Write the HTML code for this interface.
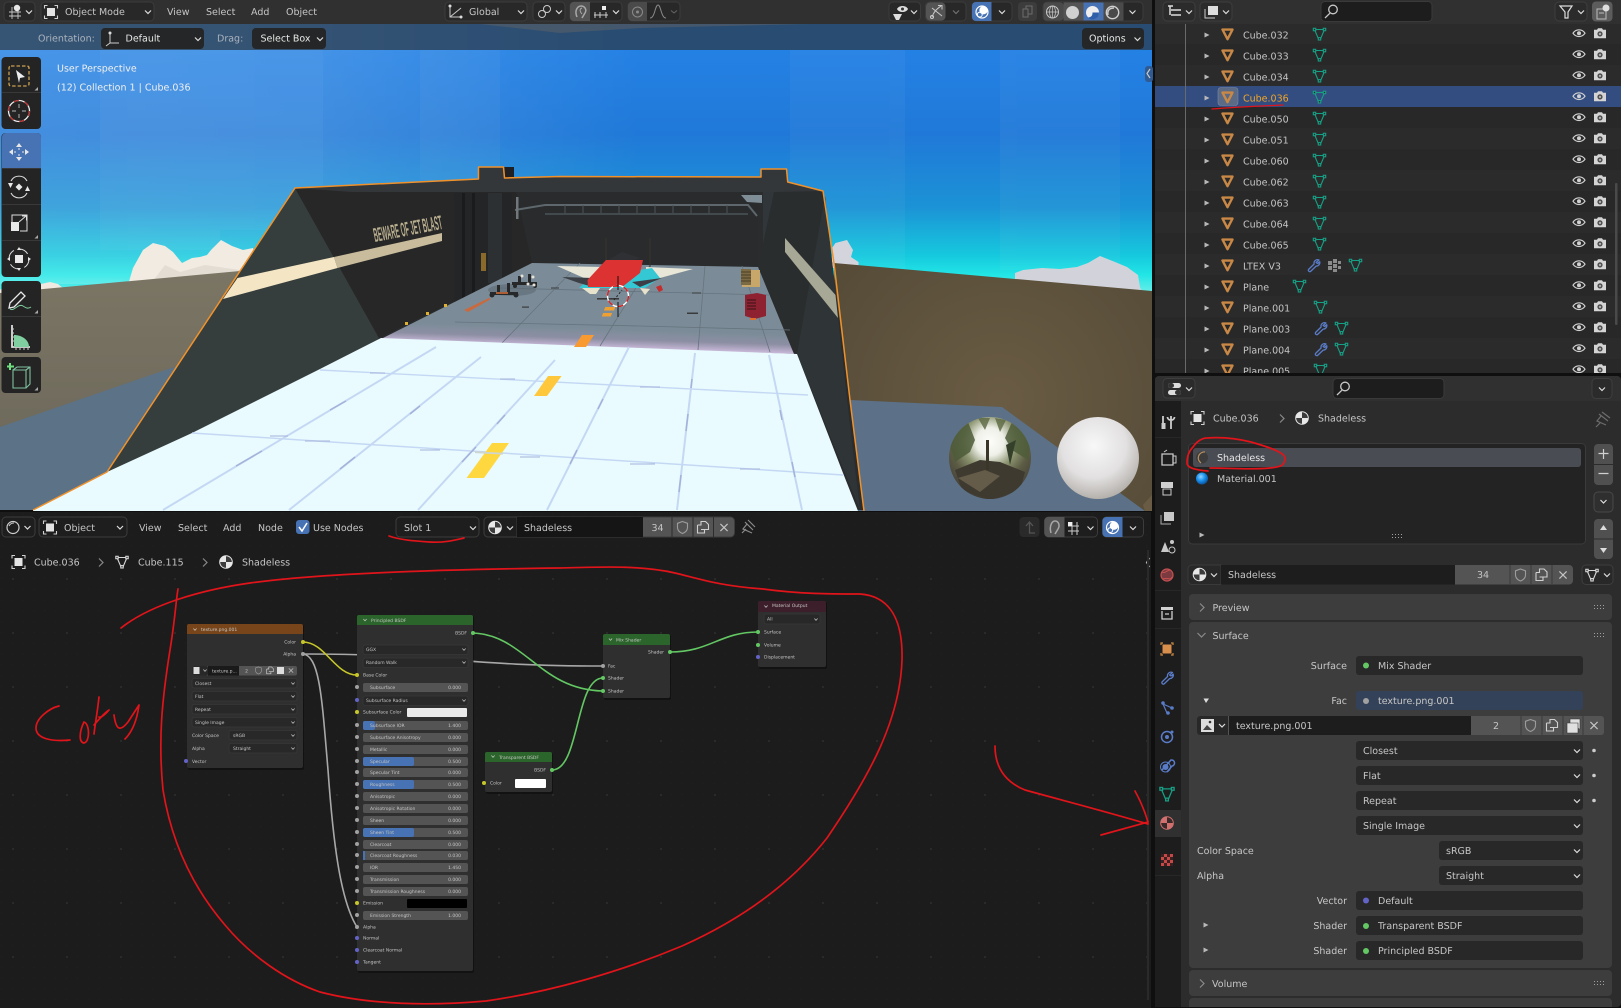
<!DOCTYPE html>
<html lang="en"><head><meta charset="utf-8"><title>Blender</title>
<style>
html,body{margin:0;padding:0;background:#0f0f0f;width:1621px;height:1008px;overflow:hidden}
svg{display:block;filter:blur(.3px)}
text{font-family:"DejaVu Sans","Liberation Sans",sans-serif;font-size:9.5px;fill:#c6c6c6;text-rendering:geometricPrecision}
.r{text-anchor:end}.m{text-anchor:middle}
.w{fill:#e6e6e6}
.n text,text.n{font-size:4.5px;fill:#c4c4c4}
.red{fill:none;stroke:#e0141a;stroke-width:1.7;stroke-linecap:round;stroke-linejoin:round}
</style></head><body>
<svg xmlns="http://www.w3.org/2000/svg" width="1621" height="1008" viewBox="0 0 1621 1008">
<defs>
<linearGradient id="sky" x1="0" y1="50" x2="0" y2="292" gradientUnits="userSpaceOnUse"><stop offset="0" stop-color="#2481e4"/><stop offset=".35" stop-color="#2079d8"/><stop offset=".65" stop-color="#1c93d6"/><stop offset=".85" stop-color="#16c9de"/><stop offset=".93" stop-color="#22e6e6"/><stop offset="1" stop-color="#66eee8"/></linearGradient>
<linearGradient id="skyl" x1="0" y1="0" x2="640" y2="0" gradientUnits="userSpaceOnUse"><stop offset="0" stop-color="#fff" stop-opacity=".16"/><stop offset=".5" stop-color="#fff" stop-opacity=".14"/><stop offset="1" stop-color="#fff" stop-opacity="0"/></linearGradient>
<linearGradient id="gl" x1="0" y1="270" x2="0" y2="470" gradientUnits="userSpaceOnUse"><stop offset="0" stop-color="#7b7564"/><stop offset="1" stop-color="#6c685a"/></linearGradient>
<radialGradient id="gr" cx="1000" cy="400" r="200" gradientUnits="userSpaceOnUse"><stop offset="0" stop-color="#6a5c44"/><stop offset="1" stop-color="#564c38"/></radialGradient>
<linearGradient id="fl" x1="585" y1="328" x2="584.4" y2="347" gradientUnits="userSpaceOnUse"><stop offset="0" stop-color="#7b8c98"/><stop offset=".55" stop-color="#8d8fa4"/><stop offset="1" stop-color="#c8b8d8"/></linearGradient>
<radialGradient id="ws" cx=".45" cy=".35" r=".72"><stop offset="0" stop-color="#f8f8f8"/><stop offset=".55" stop-color="#e2e0e0"/><stop offset="1" stop-color="#a8a49e"/></radialGradient>
<radialGradient id="hs" cx=".5" cy=".3" r=".78"><stop offset="0" stop-color="#fdfdfa"/><stop offset=".22" stop-color="#eef0e8"/><stop offset=".42" stop-color="#8c9470"/><stop offset=".62" stop-color="#5c5c44"/><stop offset=".85" stop-color="#46423a"/><stop offset="1" stop-color="#2f2b22"/></radialGradient>
<radialGradient id="ball" cx=".4" cy=".35" r=".7"><stop offset="0" stop-color="#8fd4ff"/><stop offset=".5" stop-color="#1890ec"/><stop offset="1" stop-color="#0a4a90"/></radialGradient>
<pattern id="gd" x="12" y="38" width="54" height="54" patternUnits="userSpaceOnUse"><rect width="2" height="2" fill="#2a2a2a"/></pattern>
<pattern id="gf" x="12" y="38" width="10.8" height="10.8" patternUnits="userSpaceOnUse"><rect width="1" height="1" fill="#212121"/></pattern>
<clipPath id="vp"><rect x="0" y="24" width="1152" height="487"/></clipPath>
<clipPath id="ol"><rect x="1155" y="24" width="466" height="349"/></clipPath>
<clipPath id="ohs"><circle cx="990" cy="458" r="41"/></clipPath>

<path id="chev" d="M-3,-1.5L0,1.5L3,-1.5" fill="none" stroke="#ddd" stroke-width="1.2"/>
<path id="chevr" d="M-2,-4L2,0L-2,4" fill="none" stroke="#8a8a8a" stroke-width="1.2"/>
<path id="arr" d="M-2.5,-2.5L2.5,0L-2.5,2.5Z" fill="#b8b8b8"/>
<g id="obj"><path d="M-6.5,-3.5V-6.5H-3.5M3.5,-6.5H6.5V-3.5M6.5,3.5V6.5H3.5M-3.5,6.5H-6.5V3.5" fill="none" stroke="#d0d0d0" stroke-width="1.1"/><rect x="-4" y="-4" width="8" height="8" fill="#e4e4e4"/></g>
<g id="mat"><circle r="6.3" fill="#e8e8e8"/><path d="M0,0V-6.3A6.3,6.3 0 0 1 6.3,0ZM0,0V6.3A6.3,6.3 0 0 1 -6.3,0Z" fill="#3c3c3c"/><circle r="6.3" fill="none" stroke="#e8e8e8"/></g>
<g id="ot"><path d="M-5,-4.6H5L0,5Z" fill="none" stroke="#c98845" stroke-width="2.4" stroke-linejoin="round"/></g>
<g id="md" fill="none" stroke="#16a085" stroke-width="1.1"><path d="M-5,-4.5H5L1,5H-1Z"/><rect x="-6.2" y="-5.7" width="2.4" height="2.4" fill="#282828"/><rect x="3.8" y="-5.7" width="2.4" height="2.4" fill="#282828"/><rect x="-1.2" y="3.6" width="2.4" height="2.4" fill="#282828"/></g>
<g id="mdw" fill="none" stroke="#d8d8d8" stroke-width="1.1"><path d="M-5,-4.5H5L1,5H-1Z"/><rect x="-6.2" y="-5.7" width="2.4" height="2.4" fill="#282828"/><rect x="3.8" y="-5.7" width="2.4" height="2.4" fill="#282828"/><rect x="-1.2" y="3.6" width="2.4" height="2.4" fill="#282828"/></g>
<path id="wr" d="M5.5,-5.5A3.5,3.5 0 0 0 0.6,-1.5L-5,4A1.5,1.5 0 0 0 -3,6L2.6,0.6A3.5,3.5 0 0 0 6.2,-3.8L4,-2L2.6,-3Z" fill="none" stroke="#5a7cc8" stroke-width="1.3" stroke-linejoin="round"/>
<g id="eye"><path d="M-6,0C-3,-4.5 3,-4.5 6,0C3,4.5 -3,4.5 -6,0Z" fill="none" stroke="#d0d0d0" stroke-width="1.2"/><circle r="2" fill="#d0d0d0"/></g>
<g id="cam"><path d="M-6,-3.4H-3L-2,-5H2L3,-3.4H6V5H-6Z" fill="#d4d4d4"/><circle cy=".7" r="2.6" fill="#4c4c4c"/><circle cy=".7" r="1.2" fill="#b0b0b0"/></g>
<g id="row"><use href="#arr" x="1207" y="0"/><use href="#ot" x="1227.5" y="-.8"/><use href="#eye" x="1579" y="-1.8"/><use href="#cam" x="1600" y="-1.8"/></g>
<g id="shield"><path d="M0,-6L5,-4.2V0C5,3 2.5,5 0,6C-2.5,5 -5,3 -5,0V-4.2Z" fill="none" stroke="#9c9c9c" stroke-width="1.1"/></g>
<g id="copy" fill="none" stroke="#d0d0d0" stroke-width="1.1"><path d="M-5.5,-2.5H-2V-6H2.5L5.5,-3V2H-2"/><path d="M-5.5,-2.5V5.5H1.5V2"/></g>
<path id="xx" d="M-3.6,-3.6L3.6,3.6M3.6,-3.6L-3.6,3.6" stroke="#c4c4c4" stroke-width="1.2"/>
<g id="over"><circle r="6" fill="none" stroke="#fff" stroke-width="1.2"/><circle cx="1.5" cy="-1.8" r="4.2" fill="#fff"/><circle cx="-2.2" cy="2.6" r="2.4" fill="none" stroke="#fff"/></g>
<path id="mag" d="M2,-2.5m-4.3,0a4.3,4.3 0 1 0 8.6,0a4.3,4.3 0 1 0 -8.6,0M-1.2,1.3L-6,6" fill="none" stroke="#c8c8c8" stroke-width="1.3"/>
<g id="drag" fill="#a0a0a0"><rect x="0" y="0" width="1" height="1"/><rect x="3" y="0" width="1" height="1"/><rect x="6" y="0" width="1" height="1"/><rect x="9" y="0" width="1" height="1"/><rect x="0" y="3" width="1" height="1"/><rect x="3" y="3" width="1" height="1"/><rect x="6" y="3" width="1" height="1"/><rect x="9" y="3" width="1" height="1"/></g>
<rect id="sl" x="363" width="105" height="9" rx="2" fill="#545454"/>
<rect id="dd" width="105" height="9.5" rx="2" fill="#282828" stroke="#3e3e3e" stroke-width=".5"/>
<rect id="pd" width="227" height="19" rx="3" fill="#282828"/>
<path id="nc" d="M-1.6,-1L0,.8L1.6,-1" fill="none" stroke="#ccc" stroke-width=".7"/>
</defs>

<!-- base -->
<rect width="1621" height="1008" fill="#0f0f0f"/>

<!-- ================ 3D VIEWPORT ================ -->
<g clip-path="url(#vp)">
<rect x="0" y="24" width="1152" height="270" fill="url(#sky)"/>
<rect x="0" y="24" width="640" height="260" fill="url(#skyl)"/>
<g fill="#fff" opacity=".035"><rect x="100" y="50" width="120" height="200"/><rect x="218" y="50" width="105" height="180"/><rect x="420" y="50" width="80" height="130"/><rect x="790" y="50" width="115" height="220"/><rect x="1000" y="50" width="120" height="220"/></g>
<path d="M128,285L133,268L143,250L153,243L165,246L173,252L182,263L192,258L200,257L207,255L211,250L221,240L232,246L243,250L253,248L262,285Z" fill="#f2ebe2"/>
<path d="M150,285L165,265L180,272L205,265L240,270L250,285Z" fill="#e4ddd4"/>
<path d="M0,290L8,283L18,282L28,286L41,284L50,282L58,284L64,289L64,295H0Z" fill="#efe9e0"/>
<path d="M832,262L832,248L835.500,243L847,240L853,250L851,257L858.500,262L858.500,268H832Z" fill="#d4d5dc"/>
<path d="M1015,282L1015,273L1023,270L1042,268L1060,269L1077,267L1088,263L1100,256L1115,262L1127,267L1138,275L1140,287L1142,292H1015Z" fill="#d2d3da"/>

<!-- left ground -->
<path d="M0,293L240,271L300,270L120,510H0Z" fill="url(#gl)"/>
<path d="M0,427L177,366L120,510H0Z" fill="#5b7287"/>
<!-- right ground -->
<path d="M834,263L1152,291V511H840Z" fill="url(#gr)"/>
<path d="M850,400L1002,407L1145,511H850Z" fill="#5c7187"/>
<path d="M1143,505L1152,495V511H1145Z" fill="#6a5c44"/>

<!-- hangar structure -->
<path d="M295,188L107,472L33,510H864L823,191L787.5,182L786.5,169H761V177L560,176L504.5,178L503.5,167H478.5V179Z" fill="#2a2c2d"/>
<path d="M295,188L107,472L33,510H190L379,338Z" fill="#363e3d"/>
<path d="M295,188L379,338L532,263L516,190Z" fill="#262726"/>
<path d="M295,188L478.5,179V167H503.5L504.5,178L560,176L761,177V169H786.5L787.5,182L823,191L820,192H352Z" fill="#33373a"/>
<path d="M504,167H514V178H505Z" fill="#1e2024"/>
<path d="M516,192H758V268L532,263Z" fill="#292b2d"/>
<path d="M454,193H512V282L454,311Z" fill="#232526"/>
<rect x="462" y="193" width="3" height="112" fill="#1a1b1c"/><rect x="472" y="193" width="3" height="100" fill="#1a1b1c"/><rect x="488" y="193" width="14" height="90" fill="#2c3032"/>
<path d="M763,192H774V268H763Z" fill="#30363a"/>
<path d="M774,192L823,191L860,510L797,354L758,267Z" fill="#2a2d2e"/>
<path d="M825,196L847,400L860,510L797,354Z" fill="#2f3436"/>
<!-- stripes -->
<path d="M223,299L237.5,278L334,257L337.5,268Z" fill="#f4e6c4"/>
<path d="M334,257L442,233V241L337.5,268Z" fill="#c8bc9c"/>
<path d="M785,238L835.5,295L838,318L785,252Z" fill="#a8a896"/>
<text transform="translate(375,242) rotate(-11) scale(.62,2.1)" style="font-size:9.5px;font-weight:bold;fill:#b8ad8e;font-family:'Liberation Sans',sans-serif">BEWARE OF JET BLAST</text>
<rect x="481" y="253" width="5" height="18" fill="#8a6a2a"/>
<!-- railing -->
<path d="M515,210L545,205H748L757,216" fill="none" stroke="#5d676c" stroke-width="2"/>
<path d="M545,214H748" fill="none" stroke="#4c5459" stroke-width="1.5"/>
<path d="M565,205v8M583,205v8M601,205v8M619,205v8M637,205v8M655,205v8M673,205v8M691,205v8M709,205v8M727,205v8" stroke="#4c5459"/>
<path d="M741,195H762V203L747,202Z" fill="#7f8d96"/>
<rect x="516" y="197" width="2.500" height="22" fill="#70787e"/>
<!-- grey floor -->
<path d="M532,263L758,267L794,354L379,340Z" fill="url(#fl)"/>
<g stroke="#66747e" stroke-width=".8" fill="none"><path d="M455,322L640,326L790,330"/><path d="M500,288L770,295"/><path d="M580,263L500,345M650,265L600,346M705,266L698,350M742,266L770,352"/></g>
<g fill="#3a3a3a"><rect x="687" y="312.500" width="11" height="1.500"/><rect x="522" y="306.500" width="7" height="1.200"/><rect x="551" y="287.500" width="8" height="1"/><rect x="692" y="292.500" width="9" height="1"/></g>
<path d="M464,310L489,298L491,299L468,312Z" fill="#c86a40"/>
<g fill="#e0b030"><rect x="405" y="322" width="3" height="3"/><rect x="426" y="312" width="3" height="3"/><rect x="444" y="304" width="3" height="3"/></g>
<!-- drones -->
<ellipse cx="512" cy="290" rx="24" ry="6" fill="#5a6670" opacity=".55"/>
<g fill="#26282a"><rect x="490" y="292" width="28" height="3"/><rect x="497" y="285" width="3" height="9"/><rect x="507" y="283" width="3" height="11"/><circle cx="492" cy="295" r="2.500"/><circle cx="516" cy="295" r="2.500"/><rect x="512" y="282" width="25" height="3"/><rect x="518" y="276" width="3" height="8"/><rect x="528" y="274" width="3" height="10"/><circle cx="515" cy="286" r="2"/><circle cx="535" cy="286" r="2"/></g>
<path d="M496,293H508" stroke="#d8703a" stroke-width="1.500"/>
<g fill="#e6e2d8"><circle cx="533" cy="277" r="1.500"/><circle cx="522" cy="276" r="1.500"/><circle cx="528" cy="284" r="1.500"/><circle cx="534" cy="285" r="1.500"/></g>
<!-- plane -->
<path d="M606,238V262M650,238V268" stroke="#39342c" stroke-width="1"/>
<path d="M557,266L602,267L602,282L584,278Z" fill="#e8e6d6"/>
<path d="M646,267L693,269L660,278L646,278Z" fill="#e8e6d6"/>
<path d="M579,288L588,280L640,270L652,268L660,278L645,288Z" fill="#34c8d4"/>
<path d="M562,277L593,278L593,287L579,283ZM662,278L632,282L640,287Z" fill="#3c4046"/>
<path d="M582,288H600L596,294H590ZM640,288L650,289L645,295Z" fill="#e6e2cc"/>
<path d="M608,260L622,252L640,258L625,263Z" fill="#2e3034"/>
<path d="M606,260L643,260L640,273L622,287L588,287L587.5,280Z" fill="#dc3232"/>
<path d="M656,287L661,285L663,290L659,292Z" fill="#c62c2c"/>
<rect x="597" y="298" width="22" height="1.6" fill="#3a3a3a"/>
<!-- crate & cabinet -->
<rect x="742" y="270" width="18" height="17" fill="#c8a86a"/><rect x="741" y="269" width="10" height="16" fill="#7c6a44"/>
<path d="M741,272H751M741,275H751M741,278H751M741,281H751" stroke="#3a3020" stroke-width=".8"/>
<path d="M745,295L757,293L766,295V316L755,319L745,316Z" fill="#8e2230"/>
<path d="M747,300H756M747,303H756M747,306H756M747,309H756" stroke="#3a1218" stroke-width="1"/>
<rect x="750" y="318" width="6" height="2" fill="#e07030"/>
<!-- cursor dashes -->
<rect x="605" y="307" width="10" height="3.5" fill="#f0a030" transform="skewX(-20) translate(112,0)"/>
<rect x="603" y="313" width="9" height="3.5" fill="#f0a030" transform="skewX(-20) translate(114,0)"/>
<!-- white floor -->
<path d="M33,510L107,472L192,433L318,370L381,338L797,354L843,473L858,511H33Z" fill="#e9fbff"/>
<g stroke="#c4d8f4" stroke-width="2" fill="none">
<path d="M163,510L436,347M289,510L481,357M418,510L555,360M547,510L629,347M677,510L695,353M802,510L769,355"/>
<path d="M192,433L843,475" stroke-width="1.500"/><path d="M320,370L808,395" stroke-width="1.400"/>
</g>
<g stroke="#a4b2da" stroke-width="1.500" fill="none"><path d="M236,466L262,451M330,410L346,401M340,469L355,457M410,414L420,406M462,462L476,447M497,424L505,415M570,464L577,450M598,409L603,399M679,492L681,475M686,431L688,414M691,388L692,379M795,477L792,462M782,420L780,410"/><path d="M270,436H288M305,441H330M420,450H440M520,457H540M630,464H655M740,469H760M370,373H385M500,379H515M640,387H660" stroke-width="1.100"/></g>
<path d="M492,443H509L484,478H466.5Z" fill="#ffd840"/><rect x="475" y="452" width="28" height="1.8" fill="#cfd6cf" transform="rotate(3 488 453)"/>
<path d="M548,376H561.6L547,396H534Z" fill="#ffc83c"/>
<path d="M582,335H594L586,347H574Z" fill="#f89a30"/>
<!-- outline -->
<path d="M33,510L107,472L295,188L478.5,179V167H503.5L504.5,178L560,176.5L761,177V169H786.5L787.7,182L823,191L834,263L850,400L864,511" fill="none" stroke="#f0922c" stroke-width="1.5" stroke-linejoin="round"/>
<!-- 3d cursor -->
<circle cx="618" cy="296" r="10.5" fill="none" stroke="#fff" stroke-width="1.4"/>
<circle cx="618" cy="296" r="10.5" fill="none" stroke="#d42020" stroke-width="1.4" stroke-dasharray="6 5"/>
<path d="M618,276V290M618,302V317" stroke="#111" stroke-width="1"/><path d="M614,300L622,290" stroke="#222" stroke-dasharray="2 2"/>
<!-- spheres -->
<circle cx="990" cy="458" r="41" fill="url(#hs)"/>
<g clip-path="url(#ohs)">
<path d="M950,445L958,430L968,422L975,440L970,452L955,462Z" fill="#4c5a38" opacity=".85"/>
<path d="M1030,445L1022,430L1012,422L1005,438L1012,450L1028,460Z" fill="#4e5c38" opacity=".85"/>
<path d="M978,418L985,430L990,418ZM995,418L1000,432L1006,420Z" fill="#5a6640" opacity=".8"/>
<path d="M1006,445L1010,465L1016,440Z" fill="#34402a"/>
<path d="M955,470L980,460L1000,462L1025,472L1020,490L990,500L962,490Z" fill="#3e3a30"/>
<path d="M958,478L985,470L1000,476L980,492Z" fill="#6e6450" opacity=".8"/>
<rect x="986" y="440" width="3" height="30" fill="#3a3628"/>
</g>
<circle cx="1098" cy="458" r="41" fill="url(#ws)"/>
<!-- toolbar strip -->
<rect x="0" y="24" width="1152" height="26" fill="#2c2c2c" opacity=".62"/>
<path d="M480,24H810L640,28L560,33Z" fill="#666" opacity=".45"/>
</g>

<!-- sidebar arrow -->
<rect x="1145" y="66" width="8" height="16" rx="3" fill="#2f5a92"/><path d="M1150,69L1147,73.5L1150,78" fill="none" stroke="#c8c8c8" stroke-width="1.2"/>

<!-- tool settings -->
<text x="38" y="41.5" style="fill:#aab2bc">Orientation:</text>
<rect x="101" y="28" width="103" height="21" rx="4" fill="#252627"/>
<path d="M110,34V43H119M110,43L106,46" fill="none" stroke="#ccc"/><circle cx="110" cy="33" r="1.5" fill="#ddd"/><text x="125.500" y="41.500" class="w">Default</text><use href="#chev" x="198" y="39"/>
<text x="217" y="41.5" style="fill:#aab2bc">Drag:</text>
<rect x="252" y="28" width="74" height="21" rx="4" fill="#252627"/><text x="260.500" y="41.500" class="w">Select Box</text><use href="#chev" x="320" y="39"/>
<rect x="1082" y="28" width="62" height="21" rx="4" fill="#252627"/><text x="1089" y="41.500" class="w">Options</text><use href="#chev" x="1137.500" y="39"/>

<!-- ================ TOP HEADER ================ -->
<rect x="0" y="0" width="1152" height="24" fill="#303030"/>
<rect x="4" y="2" width="31" height="19" rx="4" fill="#282828" stroke="#3c3c3c"/>
<path d="M9,16H21M12,7V19M18,9V19M9,12H21" stroke="#c8c8c8" stroke-width=".9"/><circle cx="17" cy="8" r="3.2" fill="#e8e8e8"/><use href="#chev" x="29" y="12"/>
<rect x="41" y="2" width="113" height="19" rx="4" fill="#282828" stroke="#3c3c3c"/>
<use href="#obj" x="51" y="12"/><text x="65" y="14.800">Object Mode</text><use href="#chev" x="148" y="12"/>
<text x="167" y="14.800">View</text><text x="206" y="14.800">Select</text><text x="251" y="14.800">Add</text><text x="286" y="14.800">Object</text>
<rect x="445" y="2" width="82" height="19" rx="4" fill="#282828" stroke="#3c3c3c"/>
<path d="M450,6V17H461M450,17L461,8" fill="none" stroke="#c8c8c8"/><circle cx="450" cy="6" r="1.5" fill="#ddd"/><circle cx="461" cy="17" r="1.5" fill="#ddd"/><text x="469" y="14.800">Global</text><use href="#chev" x="521" y="12"/>
<rect x="533" y="2" width="32" height="19" rx="4" fill="#282828" stroke="#3c3c3c"/>
<circle cx="542" cy="14" r="3.5" fill="none" stroke="#ccc"/><circle cx="547" cy="9" r="3.500" fill="none" stroke="#ccc"/><use href="#chev" x="559" y="12"/>
<rect x="570" y="2" width="52" height="19" rx="4" fill="#282828" stroke="#3c3c3c"/><path d="M570,6a4,4 0 0 1 4,-4h16v19h-16a4,4 0 0 1 -4,-4Z" fill="#545454"/>
<path d="M577,17C574,10 578,6 581,6C585,6 587,10 585,13L582,18" fill="none" stroke="#a8a8a8" stroke-width="1.500"/><path d="M582,8C579,9 580,12 582,14" fill="none" stroke="#a8a8a8"/>
<path d="M594,15H608M595,12V18M600,12V18M606,12V18" stroke="#ccc" fill="none"/><rect x="602" y="6" width="4" height="4" fill="#eee"/><use href="#chev" x="616" y="12"/>
<rect x="628" y="2" width="52" height="19" rx="4" fill="#282828" stroke="#3c3c3c"/><path d="M628,6a4,4 0 0 1 4,-4h15v19h-15a4,4 0 0 1 -4,-4Z" fill="#4a4a4a"/>
<circle cx="637.500" cy="12" r="5" fill="none" stroke="#8a8a8a"/><circle cx="637.500" cy="12" r="1.500" fill="#8a8a8a"/>
<path d="M650,18C655,18 655,5 658,5C661,5 661,18 666,18" fill="none" stroke="#8a8a8a"/><path d="M671,10.500L674,13L677,10.500" fill="none" stroke="#666"/>
<rect x="889" y="2" width="31.500" height="19" rx="4" fill="#282828" stroke="#3c3c3c"/>
<path d="M893,14L902,14L899,20L896,20Z" fill="#ddd"/><path d="M897,9C899,5 906,5 908,9C906,13 899,13 897,9Z" fill="#ddd"/><circle cx="902.500" cy="9" r="1.500" fill="#333"/><use href="#chev" x="914" y="12"/>
<rect x="925.500" y="2" width="40.500" height="19" rx="4" fill="#282828" stroke="#3c3c3c"/><rect x="926" y="2.500" width="19.500" height="18" rx="4" fill="#545454"/>
<path d="M932,17C934,11 937,9 941,6M938,5.500H942V9.500M932,8L942,16" fill="none" stroke="#c8c8c8"/><circle cx="932" cy="17" r="1.500" fill="none" stroke="#ccc"/><use href="#chev" x="956" y="12" opacity=".4"/>
<rect x="972" y="2" width="40" height="19" rx="4" fill="#282828" stroke="#3c3c3c"/><path d="M972,6a4,4 0 0 1 4,-4h15.500v19h-15.500a4,4 0 0 1 -4,-4Z" fill="#4772b3"/><use href="#over" x="982" y="12"/><use href="#chev" x="1002" y="12"/>
<rect x="1018" y="2" width="19" height="19" rx="4" fill="#3c3c3c"/><path d="M1023,9H1028V17H1023Z M1026,9V6H1032V14H1028" fill="none" stroke="#6c6c6c"/>
<rect x="1043" y="2" width="100" height="19" rx="4" fill="#282828" stroke="#3c3c3c"/>
<rect x="1043.500" y="2.500" width="20" height="18" rx="3" fill="#4a4a4a"/><rect x="1063.500" y="2.500" width="20" height="18" fill="#545454"/><rect x="1083.500" y="2.500" width="20" height="18" fill="#4772b3"/><rect x="1103.500" y="2.500" width="20" height="18" fill="#4a4a4a"/>
<circle cx="1052.500" cy="12" r="6" fill="none" stroke="#c8c8c8"/><path d="M1046.500,12H1058.500M1052.500,6V18" stroke="#c8c8c8" stroke-width=".7"/><ellipse cx="1052.500" cy="12" rx="3" ry="6" fill="none" stroke="#c8c8c8" stroke-width=".7"/>
<circle cx="1072.500" cy="12.500" r="6.500" fill="#d0d0d0"/>
<circle cx="1092.500" cy="12.500" r="6.500" fill="#eee"/><path d="M1092.500,12.500H1099A6.500,6.500 0 0 1 1088,17.500C1092,17 1092.500,15 1092.500,12.500Z" fill="#2f5fa8"/>
<circle cx="1112.500" cy="12.500" r="6.200" fill="none" stroke="#cfcfcf" stroke-width="1.400"/><path d="M1108,15C1107,10 1110,8 1114,8" fill="none" stroke="#cfcfcf" stroke-width="1.500"/>
<use href="#chev" x="1132.500" y="12"/>

<!-- viewport overlay text -->
<text x="57" y="71.500" style="fill:#f0f0f0">User Perspective</text>
<text x="57" y="90.500" style="fill:#f0f0f0">(12) Collection 1 | Cube.036</text>

<!-- left tools -->
<g>
<rect x="1.500" y="57" width="39.500" height="72" rx="4" fill="#242424"/><rect x="1.500" y="133" width="39.500" height="144" rx="4" fill="#242424"/><rect x="1.500" y="281" width="39.500" height="72" rx="4" fill="#242424"/><rect x="1.500" y="357" width="39.500" height="36" rx="4" fill="#242424"/>
<path d="M2,168.500H41M2,204.500H41M2,240.500H41M2,92.500H41M2,316.500H41" stroke="#383838"/>
<path d="M2,137a4,4 0 0 1 4,-4h31a4,4 0 0 1 4,4v31H2Z" fill="#4772b3"/>
<rect x="9" y="66" width="20" height="20" rx="2" fill="none" stroke="#c9a050" stroke-width="1.300" stroke-dasharray="3.500 2"/><path d="M16,70L25,77L20,78L19,83Z" fill="#eee"/>
<circle cx="19" cy="111" r="10.500" fill="none" stroke="#eee" stroke-width="1.300"/><circle cx="19" cy="111" r="10.500" fill="none" stroke="#b93030" stroke-width="1.300" stroke-dasharray="5 5.990"/><path d="M19,104V108M19,114V118M12,111H16M22,111H26" stroke="#999" stroke-width="1.200"/>
<g fill="#e8e8e8"><path d="M19,143L16,147H22ZM19,161L16,157H22ZM9,152L13,149V155ZM29,152L25,149V155Z"/><path d="M14,152H16M22,152H24M19,148V150M19,154V156" stroke="#e8e8e8"/></g>
<path d="M11,181A9,9 0 0 1 27,181M11,193A9,9 0 0 0 27,193" fill="none" stroke="#ddd" stroke-width="1.100"/><path d="M19,183.500L22.500,187L19,190.500L15.500,187ZM8,183L13,183L10.500,188ZM25,191L30,191L27.500,186Z" fill="#e8e8e8"/>
<rect x="11" y="222" width="8" height="9" fill="#e8e8e8"/><path d="M12,222V215H27V231H20M19,222L26,216M22,216H26.500V220.500" fill="none" stroke="#ddd" stroke-width="1"/>
<circle cx="19" cy="259" r="10" fill="none" stroke="#ddd" stroke-width="1" stroke-dasharray="10 5.700"/><rect x="15" y="255" width="8" height="8" fill="#e8e8e8"/><path d="M19,247L17,250H21ZM19,271L17,268H21ZM7,259L10,257V261ZM31,259L28,257V261Z" fill="#e8e8e8"/>
<path d="M10,303L21,292L25,296L14,307L9,308Z" fill="none" stroke="#e8e8e8" stroke-width="1.300"/><path d="M10,309C14,312 18,303 23,306C26,308 28,309 31,307" fill="none" stroke="#7fd0a0" stroke-width="1"/>
<path d="M12,325V347H30" fill="none" stroke="#ddd" stroke-width="1.800"/><path d="M14,347V335C22,335 29,340 29,347Z" fill="#80cfa0"/><path d="M11,329H14M11,333H14M11,337H14M11,341H14M16,350V348M20,350V348M24,350V348M28,350V348" stroke="#ccc"/>
<path d="M13,370H26V388H13ZM13,370L17,367H30V384L26,388M26,370L30,367" fill="none" stroke="#7fc0a0" stroke-width="1.100"/><path d="M10,363V370M7,366.500H14" stroke="#6fe080" stroke-width="2"/>
<path d="M38,90.500H34.500L38,87Z" fill="#aaa"/><path d="M38,238.500H34.500L38,235Z" fill="#aaa"/><path d="M38,313.500H34.500L38,310Z" fill="#aaa"/><path d="M38,390.500H34.500L38,387Z" fill="#aaa"/>
</g>

<!-- ================ NODE EDITOR ================ -->
<rect x="0" y="512" width="1151" height="496" fill="#1c1c1c"/>
<rect x="0" y="512" width="1151" height="496" fill="url(#gf)"/>
<rect x="0" y="560" width="1151" height="448" fill="url(#gd)"/>
<!-- header -->
<rect x="2" y="517" width="33" height="20" rx="4" fill="#1e1e1e" stroke="#3c3c3c"/><circle cx="13" cy="527.500" r="6" fill="none" stroke="#ccc" stroke-width="1.200"/><path d="M9,526C10,524 12,523 14,523" stroke="#ccc" fill="none"/><use href="#chev" x="27.500" y="527.500"/>
<rect x="39" y="517" width="88" height="20" rx="4" fill="#1e1e1e" stroke="#3c3c3c"/><use href="#obj" x="50" y="527.500"/><text x="64" y="530.800">Object</text><use href="#chev" x="120" y="527.500"/>
<text x="139" y="530.800">View</text><text x="178" y="530.800">Select</text><text x="223" y="530.800">Add</text><text x="258" y="530.800">Node</text>
<rect x="296" y="520" width="13.500" height="14" rx="3" fill="#4772b3"/><path d="M299,527L302,531L307,523" fill="none" stroke="#fff" stroke-width="1.500"/><text x="313" y="530.800">Use Nodes</text>
<rect x="396" y="517" width="83" height="20" rx="4" fill="#1e1e1e" stroke="#3c3c3c"/><text x="404" y="530.800">Slot 1</text><use href="#chev" x="473" y="528"/>
<rect x="484" y="517" width="250.500" height="20" rx="4" fill="#545454" stroke="#3c3c3c"/><path d="M488,517h29v20h-29a4,4 0 0 1 -4,-4v-12a4,4 0 0 1 4,-4Z" fill="#1e1e1e" stroke="#3c3c3c"/><use href="#mat" x="495" y="527.500"/><use href="#chev" x="510" y="528"/>
<rect x="517" y="517" width="126" height="20" fill="#151515"/><text x="524" y="530.800">Shadeless</text>
<text x="657.500" y="531" class="m">34</text><path d="M672,517V537M693,517V537M713.500,517V537" stroke="#2c2c2c"/><use href="#shield" x="682.500" y="527.500"/><use href="#copy" x="703" y="527.500"/><use href="#xx" x="724" y="527.500"/>
<path d="M742,533L746,529M745,522L753,530M748,520L755,527M747,524L743,529L752,533" fill="none" stroke="#8a8a8a" stroke-width="1.200"/>
<rect x="1019.500" y="517" width="20" height="20" rx="4" fill="#2a2a2a"/><path d="M1029.500,522V533H1035M1026,526L1029.500,522L1033,526" fill="none" stroke="#555" stroke-width="1.300"/>
<rect x="1044.500" y="517" width="53" height="20" rx="4" fill="#1e1e1e" stroke="#3c3c3c"/><path d="M1044.500,521a4,4 0 0 1 4,-4h16v20h-16a4,4 0 0 1 -4,-4Z" fill="#545454"/><path d="M1051,533C1049,526 1052,521 1055,521C1059,521 1060,526 1058,529L1055,534" fill="none" stroke="#a8a8a8" stroke-width="1.500"/>
<path d="M1068,526H1079M1068,531H1079M1072,522V535M1077,522V535" stroke="#ccc" fill="none"/><rect x="1068" y="522" width="4" height="4" fill="#eee"/><use href="#chev" x="1090.500" y="528"/>
<rect x="1102.500" y="517" width="41" height="20" rx="4" fill="#1e1e1e" stroke="#3c3c3c"/><path d="M1102.500,521a4,4 0 0 1 4,-4h16v20h-16a4,4 0 0 1 -4,-4Z" fill="#4772b3"/><use href="#over" x="1112.500" y="527.500"/><use href="#chev" x="1133" y="528"/>
<!-- breadcrumbs -->
<use href="#obj" x="18.500" y="562"/><text x="34" y="565.500">Cube.036</text><use href="#chevr" x="101" y="562.500"/>
<use href="#mdw" x="122" y="562"/><text x="138" y="565.500">Cube.115</text><use href="#chevr" x="205" y="562.500"/>
<use href="#mat" x="226" y="562"/><text x="242" y="565.500">Shadeless</text>
<path d="M1149.500,558L1146.500,562.500L1149.500,567" fill="none" stroke="#bbb" stroke-width="1.200"/>
<rect x="1147" y="550" width="2" height="450" fill="#2a2a2a"/>

<!-- links -->
<g fill="none" stroke-width="1.600">
<path d="M303,654C450,654 460,666 603,666" stroke="#a8a8a8"/>
<path d="M303,654C320,656 322,700 328,770C333,840 340,900 357,927" stroke="#a8a8a8"/>
<path d="M303,642C325,642 335,675 357,675" stroke="#c7c729"/>
<path d="M473,633C525,635 540,690 603,691" stroke="#63c763"/>
<path d="M552,770C580,770 575,678 603,678" stroke="#63c763"/>
<path d="M670,652C710,652 720,632 758,632" stroke="#63c763"/>
</g>

<!-- node shadows -->
<g fill="#000" opacity=".35"><rect x="188" y="625" width="116" height="145" rx="2"/><rect x="358" y="616" width="116" height="357" rx="2"/><rect x="604" y="635" width="67" height="65" rx="2"/><rect x="486" y="753" width="67" height="41" rx="2"/><rect x="759" y="602" width="68" height="67" rx="2"/></g>

<!-- Texture node -->
<g class="n">
<rect x="187" y="624" width="116" height="144" rx="2" fill="#2f2f2f"/>
<path d="M187,634V626a2,2 0 0 1 2,-2h112a2,2 0 0 1 2,2v8Z" fill="#774519"/><use href="#nc" x="195" y="629.500"/><text x="201" y="631">texture.png.001</text>
<text x="296" y="643.500" class="r">Color</text><text x="296" y="655.500" class="r">Alpha</text>
<rect x="192" y="666" width="105" height="9.500" rx="2" fill="#545454"/><rect x="192" y="666" width="16" height="9.500" rx="2" fill="#282828"/><rect x="208" y="666" width="31" height="9.500" fill="#1a1a1a"/>
<rect x="193.500" y="667" width="6" height="7" fill="#ddd"/><use href="#nc" x="205" y="670.500"/>
<text x="212" y="672.300">texture.p...</text><text x="246.500" y="672.300" class="m">2</text>
<use href="#shield" transform="translate(258.500,670.500) scale(.6)"/><use href="#copy" transform="translate(270,670.500) scale(.6)"/><rect x="277" y="667" width="7" height="7" fill="#ddd"/><use href="#xx" transform="translate(291,670.500) scale(.6)"/>
<use href="#dd" x="192" y="678.500"/><text x="195" y="684.800">Closest</text><use href="#nc" x="293" y="683.500"/>
<use href="#dd" x="192" y="691.500"/><text x="195" y="697.800">Flat</text><use href="#nc" x="293" y="696.500"/>
<use href="#dd" x="192" y="704.500"/><text x="195" y="710.800">Repeat</text><use href="#nc" x="293" y="709.500"/>
<use href="#dd" x="192" y="717.500"/><text x="195" y="723.800">Single Image</text><use href="#nc" x="293" y="722.500"/>
<text x="192" y="736.800">Color Space</text><rect x="229" y="730.500" width="68" height="9.500" rx="2" fill="#282828" stroke="#3e3e3e" stroke-width=".5"/><text x="233" y="736.800">sRGB</text><use href="#nc" x="293" y="735.500"/>
<text x="192" y="749.800">Alpha</text><rect x="229" y="743.500" width="68" height="9.500" rx="2" fill="#282828" stroke="#3e3e3e" stroke-width=".5"/><text x="233" y="749.800">Straight</text><use href="#nc" x="293" y="748.500"/>
<text x="192" y="762.800">Vector</text>
<circle cx="303" cy="642" r="2" fill="#c7c729"/><circle cx="303" cy="654" r="2" fill="#a1a1a1"/><circle cx="186" cy="761" r="2" fill="#6363c7"/>
</g>

<!-- Principled node -->
<g class="n">
<rect x="357" y="615" width="116" height="356" rx="2" fill="#2f2f2f"/>
<path d="M357,625V617a2,2 0 0 1 2,-2h112a2,2 0 0 1 2,2v8Z" fill="#2b652b"/><use href="#nc" x="365" y="620"/><text x="371" y="621.800">Principled BSDF</text>
<text x="467" y="634.600" class="r">BSDF</text>
<use href="#dd" x="363" y="645"/><text x="366" y="651.200">GGX</text><use href="#nc" x="464" y="649.500"/>
<use href="#dd" x="363" y="658"/><text x="366" y="664.200">Random Walk</text><use href="#nc" x="464" y="662.500"/>
<text x="363" y="676.600">Base Color</text>
<use href="#sl" y="683"/><text x="370" y="689">Subsurface</text><text x="461" y="689" class="r">0.000</text>
<use href="#dd" x="363" y="696"/><text x="366" y="702">Subsurface Radius</text><use href="#nc" x="464" y="700.500"/>
<text x="363" y="713.600">Subsurface Color</text><rect x="407" y="708" width="60" height="9" rx="1" fill="#eaeaea"/>
<use href="#sl" y="721"/><rect x="363" y="721" width="12" height="9" rx="2" fill="#4772b3"/><text x="370" y="727">Subsurface IOR</text><text x="461" y="727" class="r">1.400</text>
<use href="#sl" y="733"/><text x="370" y="739">Subsurface Anisotropy</text><text x="461" y="739" class="r">0.000</text>
<use href="#sl" y="745"/><text x="370" y="751">Metallic</text><text x="461" y="751" class="r">0.000</text>
<use href="#sl" y="757"/><rect x="363" y="757" width="51" height="9" rx="2" fill="#4772b3"/><text x="370" y="763">Specular</text><text x="461" y="763" class="r">0.500</text>
<use href="#sl" y="768"/><text x="370" y="774">Specular Tint</text><text x="461" y="774" class="r">0.000</text>
<use href="#sl" y="780"/><rect x="363" y="780" width="51" height="9" rx="2" fill="#4772b3"/><text x="370" y="786">Roughness</text><text x="461" y="786" class="r">0.500</text>
<use href="#sl" y="792"/><text x="370" y="798">Anisotropic</text><text x="461" y="798" class="r">0.000</text>
<use href="#sl" y="804"/><text x="370" y="810">Anisotropic Rotation</text><text x="461" y="810" class="r">0.000</text>
<use href="#sl" y="816"/><text x="370" y="822">Sheen</text><text x="461" y="822" class="r">0.000</text>
<use href="#sl" y="828"/><rect x="363" y="828" width="51" height="9" rx="2" fill="#4772b3"/><text x="370" y="834">Sheen Tint</text><text x="461" y="834" class="r">0.500</text>
<use href="#sl" y="840"/><text x="370" y="846">Clearcoat</text><text x="461" y="846" class="r">0.000</text>
<use href="#sl" y="851"/><rect x="363" y="851" width="2" height="9" fill="#4772b3"/><text x="370" y="857">Clearcoat Roughness</text><text x="461" y="857" class="r">0.030</text>
<use href="#sl" y="863"/><text x="370" y="869">IOR</text><text x="461" y="869" class="r">1.450</text>
<use href="#sl" y="875"/><text x="370" y="881">Transmission</text><text x="461" y="881" class="r">0.000</text>
<use href="#sl" y="887"/><text x="370" y="893">Transmission Roughness</text><text x="461" y="893" class="r">0.000</text>
<text x="363" y="904.600">Emission</text><rect x="407" y="899" width="60" height="9" rx="1" fill="#000"/>
<use href="#sl" y="911"/><text x="370" y="917">Emission Strength</text><text x="461" y="917" class="r">1.000</text>
<text x="363" y="928.600">Alpha</text><text x="363" y="939.600">Normal</text><text x="363" y="951.600">Clearcoat Normal</text><text x="363" y="963.600">Tangent</text>
<circle cx="473" cy="633" r="2" fill="#63c763"/>
<g fill="#a1a1a1"><circle cx="357" cy="687" r="2"/><circle cx="357" cy="725" r="2"/><circle cx="357" cy="737" r="2"/><circle cx="357" cy="749" r="2"/><circle cx="357" cy="761" r="2"/><circle cx="357" cy="772" r="2"/><circle cx="357" cy="784" r="2"/><circle cx="357" cy="796" r="2"/><circle cx="357" cy="808" r="2"/><circle cx="357" cy="820" r="2"/><circle cx="357" cy="832" r="2"/><circle cx="357" cy="844" r="2"/><circle cx="357" cy="855" r="2"/><circle cx="357" cy="867" r="2"/><circle cx="357" cy="879" r="2"/><circle cx="357" cy="891" r="2"/><circle cx="357" cy="915" r="2"/><circle cx="357" cy="927" r="2"/></g>
<g fill="#c7c729"><circle cx="357" cy="675" r="2"/><circle cx="357" cy="712" r="2"/><circle cx="357" cy="903" r="2"/></g>
<g fill="#6363c7"><circle cx="357" cy="700" r="2"/><circle cx="357" cy="938" r="2"/><circle cx="357" cy="950" r="2"/><circle cx="357" cy="962" r="2"/></g>
</g>

<!-- Mix Shader -->
<g class="n">
<rect x="603" y="634" width="67" height="64" rx="2" fill="#2f2f2f"/><path d="M603,645V636a2,2 0 0 1 2,-2h63a2,2 0 0 1 2,2v9Z" fill="#2b652b"/><use href="#nc" x="610.500" y="639.500"/><text x="616" y="641.300">Mix Shader</text>
<text x="664" y="653.600" class="r">Shader</text><text x="608" y="667.600">Fac</text><text x="608" y="679.600">Shader</text><text x="608" y="692.600">Shader</text>
<circle cx="670" cy="652" r="2" fill="#63c763"/><circle cx="603" cy="666" r="2" fill="#a1a1a1"/><circle cx="603" cy="678" r="2" fill="#63c763"/><circle cx="603" cy="691" r="2" fill="#63c763"/>
</g>
<!-- Transparent -->
<g class="n">
<rect x="485" y="752" width="67" height="40" rx="2" fill="#2f2f2f"/><path d="M485,762V754a2,2 0 0 1 2,-2h63a2,2 0 0 1 2,2v8Z" fill="#2b652b"/><use href="#nc" x="493" y="756.500"/><text x="499" y="758.800">Transparent BSDF</text>
<text x="546" y="771.600" class="r">BSDF</text><text x="490" y="784.600">Color</text><rect x="515" y="779" width="31" height="9" rx="1" fill="#fff"/>
<circle cx="552" cy="770" r="2" fill="#63c763"/><circle cx="484" cy="783" r="2" fill="#c7c729"/>
</g>
<!-- Material Output -->
<g class="n">
<rect x="758" y="601" width="68" height="66" rx="2" fill="#2f2f2f"/><path d="M758,612V603a2,2 0 0 1 2,-2h64a2,2 0 0 1 2,2v9Z" fill="#3c1f2a"/><use href="#nc" x="766" y="606.500"/><text x="772" y="606.800">Material Output</text>
<rect x="764" y="614" width="56" height="10" rx="2" fill="#282828" stroke="#3e3e3e" stroke-width=".5"/><text x="767" y="620.500">All</text><use href="#nc" x="816" y="619.500"/>
<text x="764" y="633.600">Surface</text><text x="764" y="646.600">Volume</text><text x="764" y="658.600">Displacement</text>
<circle cx="758" cy="632" r="2" fill="#63c763"/><circle cx="758" cy="645" r="2" fill="#63c763"/><circle cx="758" cy="657" r="2" fill="#6363c7"/>
</g>

<!-- ================ OUTLINER ================ -->
<rect x="1155" y="0" width="466" height="373" fill="#282828"/>
<rect x="1155" y="0" width="466" height="24" fill="#303030"/>
<rect x="1163" y="2" width="32" height="19" rx="4" fill="#2b2b2b" stroke="#3e3e3e"/><path d="M1168,6H1173M1171,10H1181M1171,15H1181M1170,6V15" fill="none" stroke="#ddd" stroke-width="1.500"/><use href="#chev" x="1189" y="12"/>
<rect x="1200" y="2" width="32" height="19" rx="4" fill="#2b2b2b" stroke="#3e3e3e"/><rect x="1208" y="6" width="10" height="9" fill="#ddd"/><path d="M1205,9V18H1215" fill="none" stroke="#ccc"/><use href="#chev" x="1226" y="12"/>
<rect x="1321" y="1.500" width="111" height="20" rx="4" fill="#1d1d1d" stroke="#3a3a3a"/><use href="#mag" x="1331" y="12"/>
<rect x="1555" y="2" width="32" height="19" rx="4" fill="#2b2b2b" stroke="#3e3e3e"/><path d="M1560,6H1572L1568,12V18H1565V12Z" fill="none" stroke="#ddd" stroke-width="1.200"/><use href="#chev" x="1581" y="12"/>
<rect x="1592" y="1.500" width="20.500" height="20" rx="4" fill="#5c5c5c"/><path d="M1597,9H1606V19H1597ZM1599,13H1604" fill="none" stroke="#bbb"/><circle cx="1606" cy="8" r="3.500" fill="#ddd"/>
<g clip-path="url(#ol)">
<g fill="#2b2b2b"><rect x="1155" y="23" width="466" height="21"/><rect x="1155" y="65" width="466" height="21"/><rect x="1155" y="128" width="466" height="21"/><rect x="1155" y="170" width="466" height="21"/><rect x="1155" y="212" width="466" height="21"/><rect x="1155" y="254" width="466" height="21"/><rect x="1155" y="296" width="466" height="21"/><rect x="1155" y="338" width="466" height="21"/></g>
<rect x="1155" y="86" width="466" height="21" fill="#334d80"/>
<rect x="1185" y="24" width="1" height="349" fill="#6a6a6a"/>
<rect x="1218" y="87.500" width="20" height="18" rx="3" fill="#5b6a85" stroke="#7a89a4" stroke-width=".6"/>
<use href="#row" y="35"/><text x="1243" y="38.500">Cube.032</text><use href="#md" x="1319.500" y="34"/>
<use href="#row" y="56"/><text x="1243" y="59.500">Cube.033</text><use href="#md" x="1319.500" y="55"/>
<use href="#row" y="77"/><text x="1243" y="80.500">Cube.034</text><use href="#md" x="1319.500" y="76"/>
<use href="#row" y="98"/><text x="1243" y="101.500" style="fill:#f5a623">Cube.036</text><use href="#md" x="1319.500" y="97"/>
<use href="#row" y="119"/><text x="1243" y="122.500">Cube.050</text><use href="#md" x="1319.500" y="118"/>
<use href="#row" y="140"/><text x="1243" y="143.500">Cube.051</text><use href="#md" x="1319.500" y="139"/>
<use href="#row" y="161"/><text x="1243" y="164.500">Cube.060</text><use href="#md" x="1319.500" y="160"/>
<use href="#row" y="182"/><text x="1243" y="185.500">Cube.062</text><use href="#md" x="1319.500" y="181"/>
<use href="#row" y="203"/><text x="1243" y="206.500">Cube.063</text><use href="#md" x="1319.500" y="202"/>
<use href="#row" y="224"/><text x="1243" y="227.500">Cube.064</text><use href="#md" x="1319.500" y="223"/>
<use href="#row" y="245"/><text x="1243" y="248.500">Cube.065</text><use href="#md" x="1319.500" y="244"/>
<use href="#row" y="266"/><text x="1243" y="269.500">LTEX V3</text><use href="#wr" x="1313.500" y="265.500"/><g fill="#8a8a8a"><rect x="1328" y="261" width="4" height="4"/><rect x="1333" y="259" width="4" height="4"/><rect x="1328" y="266" width="4" height="4"/><rect x="1333" y="264" width="4" height="4"/><rect x="1338" y="261" width="3" height="3"/><rect x="1338" y="266" width="3" height="3"/><rect x="1333" y="269" width="4" height="3"/></g><use href="#md" x="1355.500" y="265"/>
<use href="#row" y="287"/><text x="1243" y="290.500">Plane</text><use href="#md" x="1299.500" y="286"/>
<use href="#row" y="308"/><text x="1243" y="311.500">Plane.001</text><use href="#md" x="1320.500" y="307"/>
<use href="#row" y="329"/><text x="1243" y="332.500">Plane.003</text><use href="#wr" x="1320.500" y="328.500"/><use href="#md" x="1341.500" y="328"/>
<use href="#row" y="350"/><text x="1243" y="353.500">Plane.004</text><use href="#wr" x="1320.500" y="349.500"/><use href="#md" x="1341.500" y="349"/>
<use href="#row" y="371"/><text x="1243" y="374.500">Plane.005</text><use href="#md" x="1320.500" y="370"/>
</g>
<rect x="1615" y="183" width="2.500" height="142" rx="1" fill="#4a4a4a"/>

<!-- ================ PROPERTIES ================ -->
<rect x="1155" y="376" width="466" height="631" rx="4" fill="#2c2c2c"/>
<path d="M1155,401V380a4,4 0 0 1 4,-4H1617a4,4 0 0 1 4,4V401Z" fill="#303030"/>
<rect x="1163" y="378.500" width="32" height="19.500" rx="4" fill="#2b2b2b" stroke="#3e3e3e"/>
<rect x="1168" y="383" width="13" height="5" rx="2.500" fill="#ddd"/><rect x="1168" y="390" width="13" height="5" rx="2.500" fill="#ddd"/><rect x="1168" y="383" width="6" height="5" rx="2.500" fill="#333"/><rect x="1175" y="390" width="6" height="5" rx="2.500" fill="#333"/><use href="#chev" x="1189" y="389"/>
<rect x="1333" y="378.500" width="111" height="20" rx="4" fill="#1d1d1d" stroke="#3a3a3a"/><use href="#mag" x="1343" y="389"/>
<rect x="1592" y="378.500" width="20" height="20" rx="4" fill="#2b2b2b" stroke="#3e3e3e"/><use href="#chev" x="1602" y="389"/>
<!-- tabs -->
<rect x="1155" y="401" width="26" height="606" fill="#1d1d1d"/>
<path d="M1155,437.500H1181M1155,590.500H1181M1155,628.500H1181M1155,875.500H1181" stroke="#272727"/>
<rect x="1155" y="810" width="26" height="27" fill="#303030"/>
<g>
<path d="M1163,416V428M1171,416V429M1167.500,417C1167.500,421 1174.500,421 1174.500,417" fill="none" stroke="#ccc" stroke-width="1.800"/><rect x="1161.500" y="423" width="4" height="6" fill="#ccc"/>
<path d="M1162,454H1173V465H1162Z" fill="none" stroke="#c8c8c8" stroke-width="1.300"/><path d="M1164,452L1167,450M1173,456H1176V463H1173" stroke="#ccc" fill="none"/>
<path d="M1161,482H1173V488H1161Z" fill="#cfcfcf"/><rect x="1163" y="489" width="8" height="6" fill="none" stroke="#ccc"/>
<rect x="1164" y="512" width="10" height="9" fill="#c8c8c8"/><path d="M1161,515V524H1171" fill="none" stroke="#aaa"/>
<path d="M1161,552L1165,542L1169,552Z" fill="#c8c8c8"/><circle cx="1172" cy="550" r="3" fill="none" stroke="#c8c8c8"/><circle cx="1172" cy="542" r="2" fill="#c8c8c8"/>
<circle cx="1167" cy="575" r="6" fill="#7a3a40" stroke="#c65050" stroke-width="1.200"/><path d="M1162,572C1165,574 1167,570 1170,570M1163,579C1167,577 1170,581 1172,577" stroke="#c65050" fill="none"/>
<rect x="1161" y="607" width="12" height="3" fill="#d0d0d0"/><path d="M1162,611V619H1172V611M1165,614H1169" fill="none" stroke="#d0d0d0" stroke-width="1.300"/>
<path d="M1161,645V643H1163M1171,643H1173V645M1173,653V655H1171M1163,655H1161V653" fill="none" stroke="#c88a45" stroke-width="1.200"/><rect x="1162.500" y="644.500" width="9" height="9" fill="#d98f4c"/>
<use href="#wr" x="1167" y="678"/>
<path d="M1163,704L1172,708M1163,704L1167,713" stroke="#5a7cc8" stroke-width="1.200"/><circle cx="1163" cy="703" r="1.800" fill="#5a7cc8"/><circle cx="1172" cy="708" r="1.800" fill="#5a7cc8"/><circle cx="1168" cy="713" r="1.800" fill="#5a7cc8"/>
<circle cx="1167" cy="737" r="5.500" fill="none" stroke="#5a7cc8" stroke-width="1.500"/><circle cx="1167" cy="737" r="2" fill="#5a7cc8"/><circle cx="1172" cy="732" r="1.500" fill="#5a7cc8"/>
<circle cx="1165.500" cy="767" r="3" fill="#5a7cc8"/><path d="M1162,770L1171,760A2.500,2.500 0 0 1 1172,766L1167,772" fill="none" stroke="#5a7cc8" stroke-width="1.500"/><circle cx="1165.500" cy="767" r="5" fill="none" stroke="#5a7cc8"/>
<g transform="translate(1167,794) scale(1.150)"><use href="#md" style="stroke-width:1.300"/></g>
<circle cx="1167" cy="823" r="6.500" fill="#d27070"/><path d="M1167,823V816.500A6.500,6.500 0 0 1 1173.500,823ZM1167,823V829.500A6.500,6.500 0 0 1 1160.500,823Z" fill="#3a2a2a"/><circle cx="1167" cy="823" r="6.300" fill="none" stroke="#d27070"/>
<rect x="1161" y="854" width="12" height="12" fill="#c84848"/><path d="M1161,854h3v3h-3zM1167,854h3v3h-3zM1164,857h3v3h-3zM1170,857h3v3h-3zM1161,860h3v3h-3zM1167,860h3v3h-3zM1164,863h3v3h-3zM1170,863h3v3h-3z" fill="#3a2020"/>
</g>
<!-- breadcrumbs -->
<use href="#obj" x="1197.500" y="418"/><text x="1213" y="421.500">Cube.036</text><use href="#chevr" x="1282" y="418.500"/><use href="#mat" x="1302" y="418"/><text x="1318" y="421.500">Shadeless</text>
<path d="M1596,427L1600,423M1599,414L1608,421M1602,412L1610,418M1601,416L1597,421L1606,425" fill="none" stroke="#6c6c6c" stroke-width="1.200"/>
<!-- material list -->
<rect x="1188.500" y="443.500" width="397" height="100.500" rx="4" fill="#232323" stroke="#3a3a3a"/>
<rect x="1193" y="448" width="388" height="19" rx="3" fill="#4a4c54"/>
<circle cx="1202" cy="457.500" r="6" fill="#3c3c3c"/><path d="M1205,452A6,6 0 0 0 1201,463" fill="none" stroke="#b89060" stroke-width="1.200"/>
<text x="1217" y="460.800" class="w">Shadeless</text>
<circle cx="1202" cy="478.500" r="6" fill="url(#ball)"/><text x="1217" y="481.800">Material.001</text>
<use href="#arr" x="1202" y="535"/><use href="#drag" x="1392" y="534"/>
<rect x="1594" y="444" width="19" height="41" rx="4" fill="#505050"/><path d="M1594,464.500H1613" stroke="#2c2c2c"/><path d="M1603.500,449V459M1598.500,453.500H1608.500M1598.500,473.500H1608.500" stroke="#d0d0d0" stroke-width="1.200"/>
<rect x="1594" y="492" width="19" height="20" rx="4" fill="#2f2f2f" stroke="#484848"/><use href="#chev" x="1603.500" y="501.500"/>
<rect x="1594" y="519" width="19" height="40" rx="4" fill="#505050"/><path d="M1594,539H1613" stroke="#2c2c2c"/><path d="M1603.500,525L1607,530H1600ZM1603.500,553L1607,548H1600Z" fill="#ddd"/>
<!-- selector -->
<rect x="1188.500" y="565" width="384.500" height="19.500" rx="4" fill="#545454"/>
<path d="M1192,565H1221V584.500H1192a4,4 0 0 1 -4,-4V569a4,4 0 0 1 4,-4Z" fill="#282828" stroke="#3a3a3a"/>
<use href="#mat" x="1199.500" y="574.500"/><use href="#chev" x="1214" y="575"/>
<rect x="1221" y="565" width="234" height="19.500" fill="#1d1d1d"/><text x="1228" y="577.800">Shadeless</text>
<text x="1483" y="578" class="m">34</text><path d="M1510,565V584M1531,565V584M1552,565V584" stroke="#3a3a3a"/>
<use href="#shield" x="1520.500" y="575"/><use href="#copy" x="1541.500" y="575"/><use href="#xx" x="1563" y="575"/>
<rect x="1582" y="565" width="31" height="19.500" rx="4" fill="#282828" stroke="#3e3e3e"/><use href="#mdw" x="1592" y="575"/><use href="#chev" x="1607" y="575"/>
<!-- panels -->
<rect x="1189" y="594" width="423" height="26" rx="4" fill="#3d3d3d"/>
<use href="#chevr" x="1202" y="607.500"/><text x="1212.500" y="610.800">Preview</text><use href="#drag" x="1594" y="605"/>
<rect x="1189" y="622" width="423" height="346" rx="4" fill="#3d3d3d"/>
<path d="M1197.500,633L1201.500,637L1205.500,633" fill="none" stroke="#8a8a8a" stroke-width="1.200"/><text x="1212.500" y="638.800">Surface</text><use href="#drag" x="1594" y="633"/>
<text x="1347" y="668.800" class="r">Surface</text><use href="#pd" x="1356" y="656"/><circle cx="1366" cy="665.500" r="3" fill="#63c763"/><text x="1378" y="668.800">Mix Shader</text>
<path d="M1203.500,698.500H1209L1206,703Z" fill="#ddd"/>
<text x="1347" y="703.800" class="r">Fac</text><rect x="1356" y="691" width="227" height="19" rx="3" fill="#334258"/><circle cx="1366" cy="701" r="3" fill="#a1a1a1"/><text x="1378" y="703.800">texture.png.001</text>
<rect x="1197" y="716" width="407" height="19" rx="3" fill="#545454"/><path d="M1200,716H1228V735H1200a3,3 0 0 1 -3,-3V719a3,3 0 0 1 3,-3Z" fill="#282828"/>
<rect x="1201" y="719" width="13" height="13" fill="#ddd"/><path d="M1203,730L1207,725L1212,730Z" fill="#444"/><circle cx="1210" cy="722" r="1.300" fill="#333"/><use href="#chev" x="1222" y="725.500"/>
<rect x="1229" y="716" width="242" height="19" fill="#1d1d1d"/><text x="1236" y="728.800">texture.png.001</text>
<text x="1496" y="729" class="m">2</text><path d="M1521,716V735M1542,716V735M1563,716V735M1583,716V735" stroke="#3a3a3a"/>
<use href="#shield" x="1530.500" y="725.500"/><use href="#copy" x="1552" y="725.500"/><path d="M1567,723H1578V733H1567ZM1570,723V719H1580V729" fill="#e0e0e0" stroke="#333" stroke-width=".6"/><use href="#xx" x="1594" y="725.500"/>
<use href="#pd" x="1356" y="741"/><text x="1363" y="753.800">Closest</text><use href="#chev" x="1577" y="751"/><circle cx="1594" cy="750.500" r="1.800" fill="#ccc"/>
<use href="#pd" x="1356" y="766"/><text x="1363" y="778.800">Flat</text><use href="#chev" x="1577" y="776"/><circle cx="1594" cy="775.500" r="1.800" fill="#ccc"/>
<use href="#pd" x="1356" y="791"/><text x="1363" y="803.800">Repeat</text><use href="#chev" x="1577" y="801"/><circle cx="1594" cy="800.500" r="1.800" fill="#ccc"/>
<use href="#pd" x="1356" y="816"/><text x="1363" y="828.800">Single Image</text><use href="#chev" x="1577" y="826"/>
<text x="1197" y="853.800">Color Space</text><rect x="1439" y="841" width="144" height="19" rx="3" fill="#282828"/><text x="1446" y="853.800">sRGB</text><use href="#chev" x="1577" y="851"/>
<text x="1197" y="878.800">Alpha</text><rect x="1439" y="866" width="144" height="19" rx="3" fill="#282828"/><text x="1446" y="878.800">Straight</text><use href="#chev" x="1577" y="876"/>
<text x="1347" y="903.800" class="r">Vector</text><use href="#pd" x="1356" y="891"/><circle cx="1366" cy="900.500" r="3" fill="#6363c7"/><text x="1378" y="903.800">Default</text>
<use href="#arr" x="1206" y="925"/>
<text x="1347" y="928.800" class="r">Shader</text><use href="#pd" x="1356" y="916"/><circle cx="1366" cy="926" r="3" fill="#63c763"/><text x="1378" y="928.800">Transparent BSDF</text>
<use href="#arr" x="1206" y="950"/>
<text x="1347" y="953.800" class="r">Shader</text><use href="#pd" x="1356" y="941"/><circle cx="1366" cy="951" r="3" fill="#63c763"/><text x="1378" y="953.800">Principled BSDF</text>
<rect x="1189" y="970" width="423" height="26" rx="4" fill="#3d3d3d"/><use href="#chevr" x="1202" y="983.500"/><text x="1212" y="986.800">Volume</text><use href="#drag" x="1594" y="981"/>
<path d="M1189,1007V1002a4,4 0 0 1 4,-4H1608a4,4 0 0 1 4,4V1007Z" fill="#3d3d3d"/>

<!-- ================ RED ANNOTATIONS ================ -->
<path class="red" d="M121,628C150,605 200,590 250,583C300,576 400,570 560,568C600,567 640,565 675,573C700,579 720,586 763,589C800,594 830,594 860,594C890,596 903,620 902,660C900,720 870,775 827,838C790,885 740,920 682,946C620,972 550,992 486,1001C430,1006 370,1005 320,992C285,980 250,955 225,925C195,890 172,845 163,790C158,740 162,700 170,650C175,620 176,600 178,589"/>
<path class="red" d="M59,706C50,708 36,718 36,728C36,738 50,742 70,740"/>
<path class="red" d="M84,722C80,730 78,742 84,743C90,742 90,724 84,722"/>
<path class="red" d="M99,697C97,715 95,725 94,734M94,725C100,718 106,712 109,710C104,716 100,718 99,717"/>
<path class="red" d="M114,715C116,730 120,732 128,722L139,705C137,720 132,732 125,739"/>
<path class="red" d="M995,746C995,765 1003,781 1025,790C1065,801 1100,810 1148,824"/>
<path class="red" d="M1135,791C1140,800 1145,812 1148,822L1101,835"/>
<path class="red" d="M389,536C400,540 415,541 429,542C445,543 455,540 464,538"/>
<path class="red" d="M1212,109C1235,107 1260,106 1283,105" style="stroke-width:1.300"/>
<path class="red" d="M1208,471C1195,470 1187,468 1187,463C1187,455 1190,450 1193,447C1198,440 1203,438 1207,438C1220,437 1235,438 1251,442C1265,446 1285,452 1285,458C1285,466 1280,467 1270,468C1250,470 1230,468 1210,468"/>
</svg>
</body></html>
